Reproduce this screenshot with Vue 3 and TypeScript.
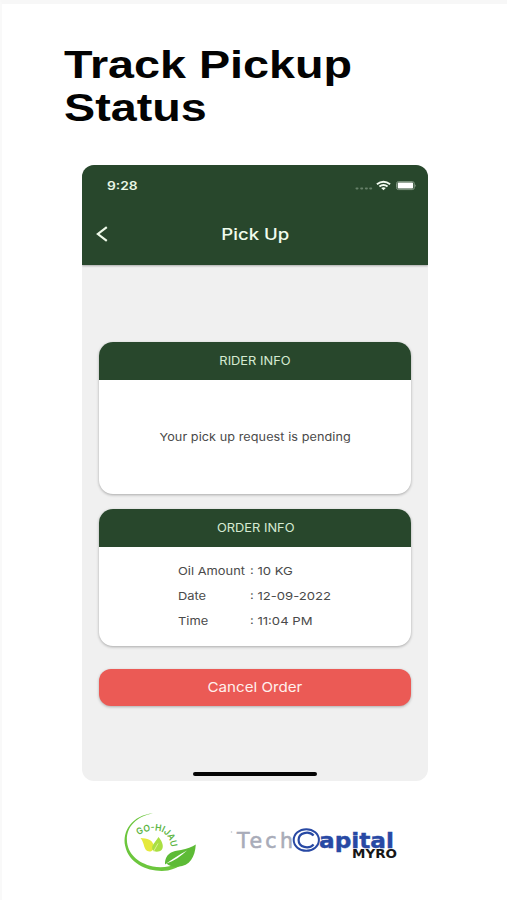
<script setup lang="ts">
interface OrderRow {
  label: string
  value: string
}

const orderRows: OrderRow[] = [
  { label: 'Oil Amount', value: '10 KG' },
  { label: 'Date', value: '12-09-2022' },
  { label: 'Time', value: '11:04 PM' },
]
</script>

<template>
  <main class="page">
    <h1 class="headline">Track Pickup<br />Status</h1>

    <section class="phone">
      <header class="top">
        <div class="status">
          <span class="clock">9:28</span>
          <svg class="indicators" width="62" height="12" viewBox="0 0 62 12">
            <g fill="#668069">
              <rect x="0.5" y="7.6" width="3" height="1.8" rx="0.8" />
              <rect x="5.2" y="7.6" width="3" height="1.8" rx="0.8" />
              <rect x="9.9" y="7.6" width="3" height="1.8" rx="0.8" />
              <rect x="14.2" y="7.6" width="3" height="1.8" rx="0.8" />
            </g>
            <g fill="none" stroke="#f2fbf0" stroke-width="1.9">
              <path d="M21.9 4.3Q28.5 -0.9 35.1 4.3" />
              <path d="M24.4 6.6Q28.5 3.3 32.6 6.6" />
            </g>
            <path d="M26.2 8Q28.5 6.4 30.8 8L28.5 10.2Z" fill="#f2fbf0" />
            <rect x="41.5" y="1.6" width="17.8" height="8" rx="2" fill="none" stroke="#7f9681" />
            <rect x="42.7" y="2.6" width="15.4" height="6" rx="0.8" fill="#fff" />
            <path d="M60.2 4.2Q62 5.6 60.2 7Z" fill="#7f9681" />
          </svg>
        </div>
        <div class="nav">
          <svg class="back" width="12" height="16" viewBox="0 0 12 16">
            <path d="M10.8 1.2L1.9 8L10.8 14.8" fill="none" stroke="#eefae9" stroke-width="2.2" />
          </svg>
          <span class="title">Pick Up</span>
        </div>
      </header>

      <div class="content">
        <article class="card rider">
          <h2 class="card-head"><span>RIDER INFO</span></h2>
          <div class="card-body pending"><span>Your pick up request is pending</span></div>
        </article>

        <article class="card order">
          <h2 class="card-head"><span>ORDER INFO</span></h2>
          <dl class="card-body rows">
            <div v-for="row in orderRows" :key="row.label" class="row">
              <dt>{{ row.label }}</dt>
              <dd>: {{ row.value }}</dd>
            </div>
          </dl>
        </article>

        <button class="cancel" type="button"><span>Cancel Order</span></button>
      </div>
      <div class="home-bar"></div>
    </section>

    <footer class="logos">
      <svg width="80" height="66" viewBox="120 808 80 66">
        <defs>
          <path id="hijau-arc" d="M138.5 835.5C146 830 158 829.5 163 832.5C168 836 170 840 171 848" />
        </defs>
        <path d="M153 813.2C132 815.5 122 831 125.2 846C129 865 151 873 168 870.5C180 868 189 860 192 852C183 865 166 869 153 866.5C137 863 127.3 853 126.9 840C126.5 826 137 816.5 153 813.2Z" fill="#6cc63d" />
        <path d="M165 864.5C165 853 173 851 181 850C187 849 192 847 195.8 844.5C195 857 190 866 178 866.8C173 867 169 866 166.5 863.5C174 861 181 856 187 850.5C179 855 172 859 165 864.5Z" fill="#5dbb36" />
        <path d="M140.5 838C147 838.5 153 839.5 153.5 846C154 850 152 851.5 149.5 851.5C143 851 145 843 140.5 838Z" fill="#e5e93c" />
        <path d="M158.5 837C163 842 164 847.5 161.5 850C159.5 852 154 852.5 152.5 849.5C151 845 155 843 158.5 837Z" fill="#a9df42" />
        <path d="M153.5 851.5L158 843.5" fill="none" stroke="#e9f4a8" stroke-width="0.8" />
        <text class="hijau" font-size="9.2" font-weight="600" fill="#5cb544">
          <textPath href="#hijau-arc" textLength="43" lengthAdjust="spacingAndGlyphs">GO-HIJAU</textPath>
        </text>
      </svg>
      <svg class="tech" width="172" height="38" viewBox="228 824 172 38">
        <circle cx="231.5" cy="832" r="0.8" fill="#bcc0ca" />
        <text x="237" y="847.5" font-size="20.5" fill="#a9acb9" stroke="#a9acb9" stroke-width="0.6" textLength="56" lengthAdjust="spacing">Tech</text>
        <ellipse cx="306.3" cy="840" rx="12.6" ry="10.8" fill="#fff" stroke="#2849a4" stroke-width="2" />
        <path d="M313.6 835.6C308.8 830.6 298.6 832.4 298.6 840S308.8 849.4 313.6 844.4" fill="none" stroke="#2849a4" stroke-width="2.2" />
        <text x="319" y="847.5" font-size="21" font-weight="700" fill="#2849a4" stroke="#2849a4" stroke-width="0.4" textLength="75" lengthAdjust="spacingAndGlyphs">apital</text>
        <text x="352" y="857.7" font-size="12.4" font-weight="700" fill="#171717" textLength="45" lengthAdjust="spacingAndGlyphs">MYRO</text>
      </svg>
    </footer>
  </main>
</template>

<style>
body {
  margin: 0;
  background: #fff;
}
</style>

<style scoped>
.page {
  box-sizing: border-box;
  width: 507px;
  height: 900px;
  overflow: hidden;
  border-top: 4px solid #f7f7f7;
  border-left: 2px solid #f9f9f9;
  background: #fff;
  font-family: Inter, 'Liberation Sans', sans-serif;
}

.headline {
  height: 86px;
  margin: 39px 0 0 62px;
  width: 300px;
  color: #030303;
  font: 700 39px/43.3px 'Liberation Sans', Arial, sans-serif;
  white-space: nowrap;
  transform: scaleX(1.197);
  transform-origin: left;
}

.phone {
  display: flex;
  flex-direction: column;
  box-sizing: border-box;
  width: 346px;
  height: 616px;
  margin: 36px 0 0 80.4px;
  overflow: hidden;
  border-radius: 12px;
  background: #f0f0f0;
}

.top {
  flex: none;
  height: 100px;
  background: #28472c;
  box-shadow: 0 1px 2px rgba(0, 0, 0, 0.3);
}

.status {
  display: flex;
  align-items: center;
  justify-content: space-between;
  height: 42px;
  padding: 0 11px 0 25px;
}

.clock {
  color: #e9f6e5;
  font-size: 11.7px;
  font-weight: 600;
  transform: scaleX(1.18);
  transform-origin: left;
}

.nav {
  display: grid;
  grid-template-columns: 40px 1fr 40px;
  align-items: center;
  height: 54px;
}

.back {
  margin-left: 14px;
}

.title {
  justify-self: center;
  color: #f0fced;
  font-size: 15.5px;
  font-weight: 500;
  transform: scaleX(1.2);
}

.content {
  display: flex;
  flex: 1;
  flex-direction: column;
  padding: 77px 17px 0;
}

.card {
  overflow: hidden;
  border-radius: 14px;
  background: #fff;
  box-shadow: 0 1px 3px rgba(0, 0, 0, 0.3);
}

.rider {
  height: 151.5px;
}

.order {
  height: 136.5px;
  margin-top: 15.5px;
}

.card-head {
  display: flex;
  align-items: center;
  justify-content: center;
  height: 37.5px;
  margin: 0;
  background: #28472c;
  color: #d5ead1;
  font-size: 11.2px;
  font-weight: 400;
}

.card-head span,
.pending span,
.cancel span {
  display: inline-block;
  transform: scaleX(1.15);
}

.pending {
  display: flex;
  align-items: center;
  justify-content: center;
  height: 114px;
  color: #4a4a4a;
  font-size: 11px;
  letter-spacing: 0.06px;
}

.rows {
  margin: 0;
  padding: 12px 0 0 79px;
  color: #4a4a4a;
  font-size: 11px;
}

.row {
  display: grid;
  grid-template-columns: 72px 1fr;
  align-items: center;
  height: 25px;
}

.row dt,
.row dd {
  margin: 0;
  white-space: nowrap;
  transform: scaleX(1.17);
  transform-origin: left;
}

.row dd {
  transform: scaleX(1.19);
}

.cancel {
  height: 37px;
  margin-top: 23px;
  border: 0;
  border-radius: 12px;
  background: #eb5a55;
  box-shadow: 0 1px 3px rgba(0, 0, 0, 0.28);
  color: #fff0ec;
  font: 400 13.4px Inter, sans-serif;
}

.cancel span {
  transform: scaleX(1.13);
}

.home-bar {
  flex: none;
  align-self: center;
  width: 124px;
  height: 4px;
  margin-bottom: 5px;
  border-radius: 2px;
  background: #050505;
}

.logos {
  display: flex;
  gap: 28px;
  padding: 27px 0 0 118px;
}

.tech {
  margin-top: 16px;
  font-family: 'DejaVu Sans', sans-serif;
}

.hijau {
  font-family: Inter, sans-serif;
}
</style>
